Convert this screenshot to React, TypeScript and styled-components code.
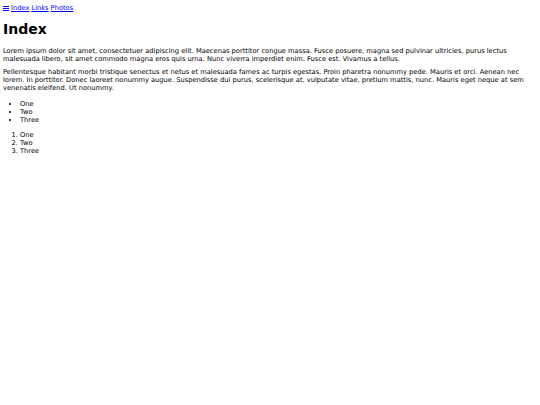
import React from "react";
import styled, { createGlobalStyle } from "styled-components";

const Global = createGlobalStyle`
  html, body { margin: 0; padding: 0; background: #fff; }
  body {
    font-family: "DejaVu Sans", Verdana, sans-serif;
    font-size: 6.7px;
    color: #000;
  }
`;

const Page = styled.div`
  padding: 4px 3px;
`;

const Nav = styled.nav`
  display: flex;
  align-items: center;
  gap: 2px;
  line-height: 8px;
`;

const NavLink = styled.a`
  color: #0000ee;
  text-decoration: underline;
`;

const Burger = styled.a`
  color: #0000ee;
  display: inline-flex;
`;

const Title = styled.h1`
  font-size: 14px;
  font-weight: bold;
  margin: 8.5px 0 0;
  line-height: 17px;
`;

const Para = styled.p<{ $top: number }>`
  margin: ${(p) => p.$top}px 0 0;
  line-height: 8px;
`;

const Bullets = styled.ul`
  margin: 8px 0 0;
  padding-left: 17px;
  line-height: 8px;
`;

const Numbers = styled.ol`
  margin: 7px 0 0;
  padding-left: 17px;
  line-height: 8px;
`;

export default function App() {
  return (
    <>
      <Global />
      <Page>
        <Nav>
          <Burger href="#">
            <svg width="6" height="5" viewBox="0 0 6 5">
              <rect x="0" y="0" width="6" height="1" fill="#0000ee" />
              <rect x="0" y="2" width="6" height="1" fill="#0000ee" />
              <rect x="0" y="4" width="6" height="1" fill="#0000ee" />
            </svg>
          </Burger>
          <NavLink href="#">Index</NavLink>
          <NavLink href="#">Links</NavLink>
          <NavLink href="#">Photos</NavLink>
        </Nav>
        <Title>Index</Title>
        <Para $top={9.5}>
          Lorem ipsum dolor sit amet, consectetuer adipiscing elit. Maecenas porttitor congue massa. Fusce posuere, magna sed pulvinar ultricies, purus lectus malesuada libero, sit amet commodo magna eros quis urna. Nunc viverra imperdiet enim. Fusce est. Vivamus a tellus.
        </Para>
        <Para $top={5}>
          Pellentesque habitant morbi tristique senectus et netus et malesuada fames ac turpis egestas. Proin pharetra nonummy pede. Mauris et orci. Aenean nec lorem. In porttitor. Donec laoreet nonummy augue. Suspendisse dui purus, scelerisque at, vulputate vitae, pretium mattis, nunc. Mauris eget neque at sem venenatis eleifend. Ut nonummy.
        </Para>
        <Bullets>
          <li>One</li>
          <li>Two</li>
          <li>Three</li>
        </Bullets>
        <Numbers>
          <li>One</li>
          <li>Two</li>
          <li>Three</li>
        </Numbers>
      </Page>
    </>
  );
}
